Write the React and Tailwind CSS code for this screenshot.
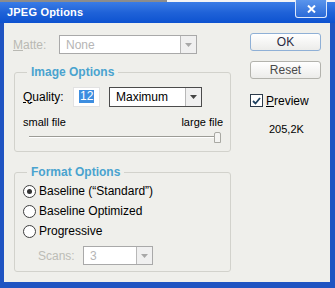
import React from 'react';

const font = { fontFamily: '"Liberation Sans", Arial, sans-serif' };

function Arrow({ disabled }) {
  return (
    <div className="flex items-center justify-center w-[16px] h-full border-l border-[#b8b8b8] bg-[#f0f0f0]">
      <svg width="7" height="4" viewBox="0 0 7 4">
        <path d="M0 0 L7 0 L3.5 4 Z" fill={disabled ? '#a8a8a8' : '#444'} />
      </svg>
    </div>
  );
}

function Select({ value, width, height, disabled }) {
  return (
    <div
      className={`flex items-stretch bg-white border ${disabled ? 'border-[#a9a9a9]' : 'border-[#4b4b4b]'} ${width} ${height}`}
    >
      <div className={`flex-1 flex items-center pl-[6px] text-[12px] ${disabled ? 'text-[#b5b5b5]' : 'text-black'}`}>
        {value}
      </div>
      <Arrow disabled={disabled} />
    </div>
  );
}

function Radio({ checked, label }) {
  return (
    <div className="flex items-center h-[20px] pl-[8px]">
      <div className="w-[13px] h-[13px] rounded-full border border-[#3f3f3f] bg-white flex items-center justify-center">
        {checked && <div className="w-[5px] h-[5px] rounded-full bg-[#333]" />}
      </div>
      <span className="ml-[3px] text-[12px] text-black">{label}</span>
    </div>
  );
}

function Group({ title, className, children }) {
  return (
    <div className={`relative ml-[1px] w-[217px] border border-[#d2d2cc] rounded-[3px] ${className}`}>
      <span className="absolute left-[12px] -top-[9px] px-[4px] bg-[#efefeb] text-[12px] font-bold text-[#4aa3cf] leading-[16px]">
        {title}
      </span>
      {children}
    </div>
  );
}

export default function App() {
  return (
    <div style={font} className="w-[335px] h-[288px] flex flex-col bg-[#1f54c2] overflow-hidden select-none">
      {/* top strip */}
      <div className="flex h-[2px]">
        <div className="w-[167px] bg-[#8c8c8c]" />
        <div className="flex-1 bg-[#f4f4f4]" />
      </div>

      {/* TITLE BAR */}
      <div className="relative h-[21px] flex items-center pl-[7px] bg-gradient-to-b from-[#3a7ce6] via-[#1f62d8] to-[#0c52d0]">
        <span className="text-white font-bold text-[11px] tracking-[0.2px]">JPEG Options</span>
        <div className="absolute right-[8px] -top-[2px] w-[32px] h-[18px] rounded-b-[3px] border border-t-0 border-[#dce8fb] bg-gradient-to-b from-[#5a95ec] to-[#2a6ad8] flex items-center justify-center">
          <svg width="9" height="8" viewBox="0 0 9 8">
            <path d="M1 0.5 L8 7.5 M8 0.5 L1 7.5" stroke="white" strokeWidth="2" />
          </svg>
        </div>
      </div>

      {/* BODY */}
      <div className="flex-1 flex ml-[4px] mr-[5px] mb-[6px] bg-[#efefeb] pl-[9px] pt-[10px]">
        {/* LEFT */}
        <div className="w-[218px] flex flex-col pt-[2px]">
          <div className="flex items-center h-[19px]">
            <span className="w-[46px] text-[12px] text-[#b9b9b3]">
              <u>M</u>atte:
            </span>
            <Select value="None" width="w-[138px]" height="h-[19px]" disabled />
          </div>

          <Group title="Image Options" className="mt-[18px] h-[80px]">
            <div className="flex items-center h-[21px] mt-[13px] pl-[8px]">
              <span className="w-[50px] text-[12px] text-black">
                <u>Q</u>uality:
              </span>
              <div className="w-[27px] h-[20px] bg-white border border-[#e2e2e2] flex items-center pl-[5px]">
                <span className="bg-[#3d8ee0] text-white text-[12px] leading-[13px] px-[1px]">12</span>
              </div>
              <div className="ml-[9px]">
                <Select value="Maximum" width="w-[93px]" height="h-[20px]" />
              </div>
            </div>
            <div className="flex justify-between items-center h-[14px] mt-[8px] pl-[8px] pr-[7px] text-[11px] text-black">
              <span>small file</span>
              <span>large file</span>
            </div>
            <div className="relative ml-[14px] w-[192px] h-[12px] mt-[3px]">
              <div className="absolute left-0 right-[4px] top-[4px] h-[1px] bg-[#9c9c96]" />
              <div className="absolute left-0 right-[4px] top-[5px] h-[1px] bg-white" />
              <div className="absolute right-0 top-0 w-[7px] h-[11px] bg-[#f4f4f2] border border-[#a9a9a3] rounded-t-[2px]" />
            </div>
          </Group>

          <Group title="Format Options" className="mt-[20px] h-[100px]">
            <div className="pt-[8px]">
              <Radio checked label={'Baseline (\u201CStandard\u201D)'} />
              <Radio label="Baseline Optimized" />
              <Radio label="Progressive" />
              <div className="flex items-center mt-[5px] pl-[23px]">
                <span className="w-[45px] text-[12px] text-[#bcbcb6]">Scans:</span>
                <Select value="3" width="w-[70px]" height="h-[19px]" disabled />
              </div>
            </div>
          </Group>
        </div>

        {/* RIGHT */}
        <div className="ml-[19px] flex flex-col">
          <button className="w-[71px] h-[18px] rounded-[3px] border border-[#8fb0d6] bg-gradient-to-b from-white to-[#ececea] text-[12px] text-[#2a2a40] leading-none">
            OK
          </button>
          <button className="mt-[10px] w-[71px] h-[18px] rounded-[3px] border border-[#b3b3ad] bg-gradient-to-b from-white to-[#ececea] text-[12px] text-[#4a4a4a] leading-none">
            Reset
          </button>
          <div className="mt-[15px] flex items-center h-[13px]">
            <div className="w-[13px] h-[13px] border border-[#2b3a4a] bg-white flex items-center justify-center">
              <svg width="9" height="8" viewBox="0 0 9 8">
                <path d="M1 4 L3.5 6.5 L8 1" stroke="#1f4260" strokeWidth="1.8" fill="none" />
              </svg>
            </div>
            <span className="ml-[3px] text-[12px] text-black">
              <u>P</u>review
            </span>
          </div>
          <div className="mt-[15px] ml-[19px] h-[14px] flex items-center text-[11px] text-black">205,2K</div>
        </div>
      </div>
    </div>
  );
}
